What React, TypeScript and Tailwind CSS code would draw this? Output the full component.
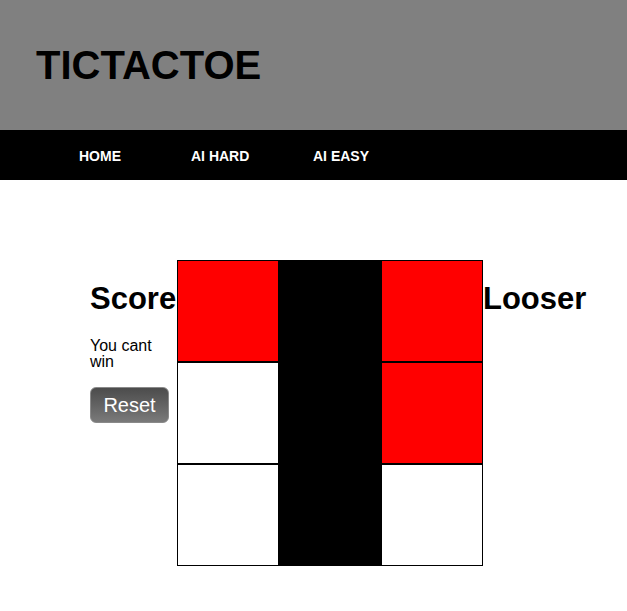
import React from "react";

const cells = [
  "red", "black", "red",
  "white", "black", "red",
  "white", "black", "white",
];

const cellColor: Record<string, string> = {
  red: "bg-[#ff0000]",
  black: "bg-black",
  white: "bg-white",
};

export default function App() {
  return (
    <div className="min-h-[611px] bg-white font-['Liberation_Sans',Arial,sans-serif] text-black">
      <header className="h-[130px] bg-[#808080] pl-[36px] pt-[42px]">
        <h1 className="text-[40px] font-bold leading-[46px]">TICTACTOE</h1>
      </header>

      <nav className="flex h-[50px] items-center bg-black pl-[79px] pt-[2px] text-[14px] font-bold text-white">
        <a className="w-[112px]">HOME</a>
        <a className="w-[122px]">AI HARD</a>
        <a>AI EASY</a>
      </nav>

      <main className="flex pl-[90px] pt-[80px]">
        <div className="w-[87px]">
          <h2 className="mt-[21px] text-[31px] font-bold leading-[36px]">Score</h2>
          <p className="mt-[21px] text-[16px] leading-[16px]">You cant win</p>
          <button className="mt-[17px] h-[36px] w-[79px] rounded-[6px] border border-[#8a8a8a] bg-gradient-to-b from-[#4c4c4c] to-[#7a7a7a] text-[20px] text-white">
            Reset
          </button>
        </div>

        <div className="grid grid-cols-[repeat(3,102px)]">
          {cells.map((c, i) => (
            <div key={i} className={`h-[102px] w-[102px] border border-black ${cellColor[c]}`} />
          ))}
        </div>

        <h2 className="mt-[21px] text-[31px] font-bold leading-[36px]">Looser</h2>
      </main>
    </div>
  );
}
